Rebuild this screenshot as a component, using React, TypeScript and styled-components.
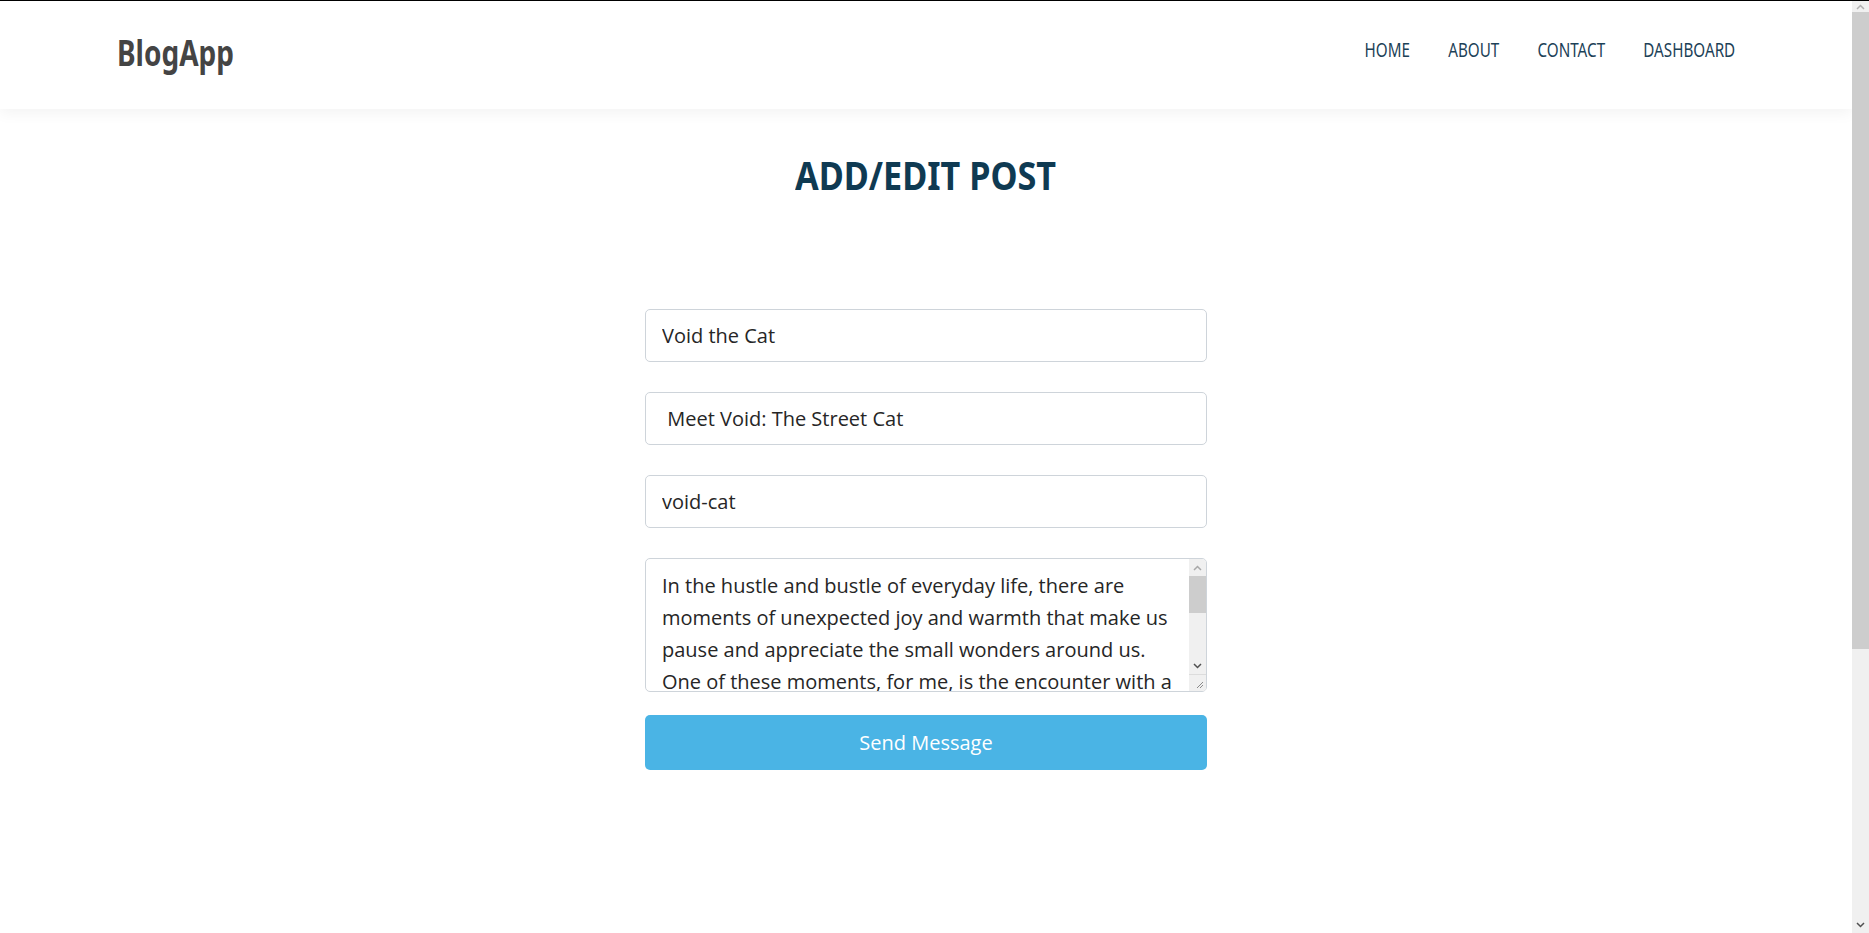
import { useState } from 'react';
import styled, { createGlobalStyle } from 'styled-components';

const COLORS = {
  NAVY: '#0f3a52',
  NAV: '#1c4157',
  LOGO: '#444444',
  BORDER: '#ced4da',
  TEXT: '#262626',
  BUTTON: '#4ab4e5',
  TRACK: '#f0f0f0',
  THUMB: '#cdcdcd',
};

const DISPLAY_FONT = `"Noto Sans", "Open Sans", sans-serif`;

const BODY_TEXT =
  'In the hustle and bustle of everyday life, there are moments of unexpected joy and warmth that make us pause and appreciate the small wonders around us. One of these moments, for me, is the encounter with a small black street cat I came to call Void. He first appeared one rainy evening under the awning of the corner bakery, his eyes glowing like two little moons in the dark. Since then he has become a familiar face on our street, greeting neighbours, napping on warm car hoods and quietly reminding us all that kindness costs nothing.';

function Chevron({ up, color }: { up?: boolean; color: string }) {
  return (
    <svg width="9" height="6" viewBox="0 0 9 6">
      <path
        d={up ? 'M1 5 L4.5 1.5 L8 5' : 'M1 1 L4.5 4.5 L8 1'}
        fill="none"
        stroke={color}
        strokeWidth="1.5"
      />
    </svg>
  );
}

function App() {
  const [title, setTitle] = useState('Void the Cat');
  const [subtitle, setSubtitle] = useState(' Meet Void: The Street Cat');
  const [slug, setSlug] = useState('void-cat');
  const [content, setContent] = useState(BODY_TEXT);

  return (
    <PageLayout>
      <GlobalStyle />
      <Viewport>
        <Header>
          <Logo>BlogApp</Logo>
          <Nav>
            <NavLink href="#">HOME</NavLink>
            <NavLink href="#">ABOUT</NavLink>
            <NavLink href="#">CONTACT</NavLink>
            <NavLink href="#">DASHBOARD</NavLink>
          </Nav>
        </Header>
        <PageBody>
          <PageTitle>ADD/EDIT POST</PageTitle>
          <PostForm onSubmit={(e) => e.preventDefault()}>
            <Field value={title} onChange={(e) => setTitle(e.target.value)} />
            <Field value={subtitle} onChange={(e) => setSubtitle(e.target.value)} />
            <Field value={slug} onChange={(e) => setSlug(e.target.value)} />
            <TextareaWrap>
              <ContentArea value={content} onChange={(e) => setContent(e.target.value)} />
              <AreaScroll>
                <AreaButton>
                  <Chevron up color="#a8a8a8" />
                </AreaButton>
                <AreaThumb />
                <Spacer />
                <AreaButton>
                  <Chevron color="#505050" />
                </AreaButton>
                <Resizer>
                  <svg width="8" height="8" viewBox="0 0 8 8">
                    <path d="M1 7 L7 1 M4 7 L7 4" stroke="#8a8a8a" strokeWidth="1" />
                  </svg>
                </Resizer>
              </AreaScroll>
            </TextareaWrap>
            <SubmitButton type="submit">Send Message</SubmitButton>
          </PostForm>
        </PageBody>
      </Viewport>
      <ScrollRail>
        <RailButton $height={11}>
          <Chevron up color="#b0b0b0" />
        </RailButton>
        <RailThumb />
        <Spacer />
        <RailButton $height={17}>
          <Chevron color="#505050" />
        </RailButton>
      </ScrollRail>
    </PageLayout>
  );
}

export default App;

const GlobalStyle = createGlobalStyle`
  html, body {
    margin: 0;
    padding: 0;
    background: #ffffff;
    overflow: hidden;
  }
  body {
    font-family: "Open Sans", "Liberation Sans", sans-serif;
    border-top: 1px solid #000000;
  }
  * {
    box-sizing: border-box;
  }
`;

const PageLayout = styled.div`
  height: calc(100vh - 1px);
  display: flex;
`;

const Viewport = styled.div`
  flex: 1;
  min-width: 0;
  overflow: hidden;
  display: flex;
  flex-direction: column;
`;

const Header = styled.header`
  flex-shrink: 0;
  height: 108px;
  padding: 0 117px;
  display: flex;
  align-items: center;
  justify-content: space-between;
  background: #ffffff;
  box-shadow: 0 4px 14px rgba(0, 0, 0, 0.05);
  position: relative;
  z-index: 1;
`;

const Logo = styled.a`
  display: inline-block;
  font-family: ${DISPLAY_FONT};
  font-size: 35px;
  font-weight: 700;
  color: ${COLORS.LOGO};
  margin-top: -6px;
  transform: scaleX(0.8);
  transform-origin: left center;
`;

const Nav = styled.nav`
  display: flex;
  align-items: center;
  gap: 49px;
  margin-top: -11px;
  transform: scaleX(0.78);
  transform-origin: right center;
`;

const NavLink = styled.a`
  font-family: ${DISPLAY_FONT};
  font-size: 19.5px;
  color: ${COLORS.NAV};
  text-decoration: none;
`;

const PageBody = styled.main`
  flex: 1;
  display: flex;
  flex-direction: column;
  align-items: center;
`;

const PageTitle = styled.h1`
  margin: 42px 0 110px;
  font-family: ${DISPLAY_FONT};
  font-size: 40px;
  font-weight: 700;
  color: ${COLORS.NAVY};
  line-height: 1.2;
  transform: scaleX(0.855);
`;

const PostForm = styled.form`
  width: 562px;
  display: flex;
  flex-direction: column;
`;

const Field = styled.input`
  height: 53px;
  margin-bottom: 30px;
  padding: 0 16px;
  border: 1px solid ${COLORS.BORDER};
  border-radius: 5px;
  font-family: "Open Sans", sans-serif;
  font-size: 20px;
  color: ${COLORS.TEXT};
  outline: none;
`;

const TextareaWrap = styled.div`
  position: relative;
  height: 134px;
  margin-bottom: 23px;
`;

const ContentArea = styled.textarea`
  width: 100%;
  height: 100%;
  display: block;
  padding: 11px 33px 10px 16px;
  border: 1px solid ${COLORS.BORDER};
  border-radius: 5px;
  font-family: "Open Sans", sans-serif;
  font-size: 20px;
  line-height: 32px;
  color: ${COLORS.TEXT};
  outline: none;
  resize: none;
  overflow: hidden;
`;

const AreaScroll = styled.div`
  position: absolute;
  top: 1px;
  right: 1px;
  bottom: 1px;
  width: 17px;
  display: flex;
  flex-direction: column;
  background: ${COLORS.TRACK};
  border-top-right-radius: 4px;
  border-bottom-right-radius: 4px;
  overflow: hidden;
  pointer-events: none;
`;

const AreaButton = styled.div`
  height: 17px;
  display: flex;
  align-items: center;
  justify-content: center;
`;

const AreaThumb = styled.div`
  height: 37px;
  background: ${COLORS.THUMB};
`;

const Spacer = styled.div`
  flex: 1;
`;

const Resizer = styled.div`
  height: 17px;
  display: flex;
  align-items: flex-end;
  justify-content: flex-end;
  padding: 0 2px 2px 0;
  border-top: 1px solid #dcdcdc;
  border-left: 1px solid #dcdcdc;
  margin-left: -1px;
  background: ${COLORS.TRACK};
`;

const SubmitButton = styled.button`
  height: 55px;
  border: none;
  border-radius: 5px;
  background: ${COLORS.BUTTON};
  color: #ffffff;
  font-family: "Open Sans", sans-serif;
  font-size: 20px;
  cursor: pointer;
`;

const ScrollRail = styled.div`
  width: 17px;
  flex-shrink: 0;
  display: flex;
  flex-direction: column;
  background: ${COLORS.TRACK};
`;

const RailButton = styled.div<{ $height: number }>`
  height: ${(p) => p.$height}px;
  display: flex;
  align-items: center;
  justify-content: center;
`;

const RailThumb = styled.div`
  height: 637px;
  background: ${COLORS.THUMB};
`;
